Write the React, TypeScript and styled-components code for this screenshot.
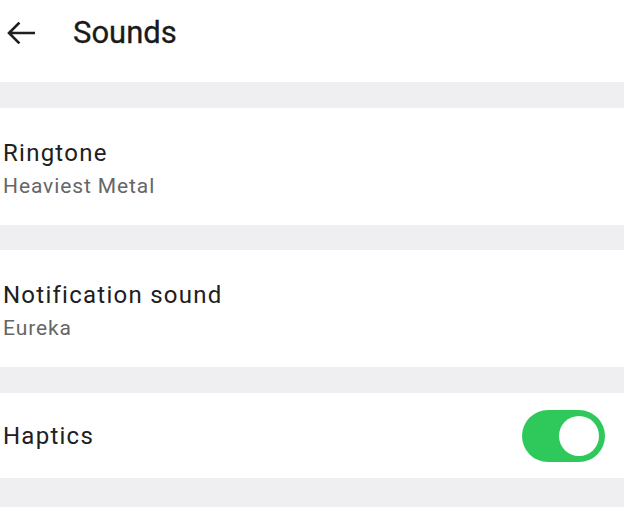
import React, { useState } from "react";
import styled, { createGlobalStyle } from "styled-components";

const GlobalStyle = createGlobalStyle`
  html, body {
    margin: 0;
    padding: 0;
    background: #efeff2;
  }
  body {
    font-family: Roboto, "Noto Sans", "Liberation Sans", sans-serif;
    -webkit-font-smoothing: antialiased;
  }
  * { box-sizing: border-box; }
`;

const Page = styled.div`
  width: 624px;
  height: 507px;
  overflow: hidden;
  background: #efeff2;
  display: flex;
  flex-direction: column;
`;

const Header = styled.header`
  height: 82px;
  background: #ffffff;
  display: flex;
  align-items: center;
  padding: 0 0 17px 6px;
  margin-bottom: 26px;
`;

const BackButton = styled.button`
  width: 30px;
  height: 30px;
  padding: 0;
  border: none;
  background: transparent;
  display: flex;
  align-items: center;
  justify-content: center;
  cursor: pointer;
  margin-right: 37px;
`;

const Title = styled.h1`
  margin: 0;
  font-size: 31px;
  font-weight: 400;
  color: #1a1a1a;
  line-height: 40px;
  -webkit-text-stroke: 0.3px #1a1a1a;
`;

const Group = styled.section`
  display: flex;
  flex-direction: column;
  gap: 25px;
`;

const Card = styled.div<{ $tall?: boolean }>`
  background: #ffffff;
  height: ${(p) => (p.$tall ? "117px" : "85px")};
  margin-top: ${(p) => (p.$tall ? "0" : "1px")};
  padding: ${(p) => (p.$tall ? "29px 19px 0 3px" : "1px 19px 0 3px")};
  display: flex;
  align-items: ${(p) => (p.$tall ? "flex-start" : "center")};
  justify-content: space-between;
`;

const TextBlock = styled.div`
  display: flex;
  flex-direction: column;
  gap: 3px;
`;

const Label = styled.div`
  font-size: 24px;
  line-height: 32px;
  letter-spacing: 1.25px;
  color: #202020;
`;

const Sub = styled.div`
  font-size: 21px;
  line-height: 28px;
  letter-spacing: 0.9px;
  color: #666666;
`;

const Track = styled.button<{ $on: boolean }>`
  width: 83px;
  height: 52px;
  border-radius: 26px;
  border: none;
  padding: 0 6px;
  background: ${(p) => (p.$on ? "#2fc95b" : "#d0d0d4")};
  display: flex;
  align-items: center;
  justify-content: ${(p) => (p.$on ? "flex-end" : "flex-start")};
  cursor: pointer;
`;

const Knob = styled.span`
  width: 40px;
  height: 40px;
  border-radius: 50%;
  background: #ffffff;
`;

function ArrowBack() {
  return (
    <svg width="28" height="22" viewBox="0 0 28 22" fill="none">
      <path
        d="M27 11H2.5M11.5 1.5L2 11l9.5 9.5"
        stroke="#1f1f1f"
        strokeWidth="2.6"
        strokeLinecap="square"
      />
    </svg>
  );
}

export default function App() {
  const [haptics, setHaptics] = useState(true);
  return (
    <>
      <GlobalStyle />
      <Page>
        <Header>
          <BackButton aria-label="Back">
            <ArrowBack />
          </BackButton>
          <Title>Sounds</Title>
        </Header>
        <Group>
          <Card $tall>
            <TextBlock>
              <Label>Ringtone</Label>
              <Sub>Heaviest Metal</Sub>
            </TextBlock>
          </Card>
          <Card $tall>
            <TextBlock>
              <Label>Notification sound</Label>
              <Sub>Eureka</Sub>
            </TextBlock>
          </Card>
          <Card>
            <Label>Haptics</Label>
            <Track $on={haptics} onClick={() => setHaptics(!haptics)} aria-label="Haptics">
              <Knob />
            </Track>
          </Card>
        </Group>
      </Page>
    </>
  );
}
